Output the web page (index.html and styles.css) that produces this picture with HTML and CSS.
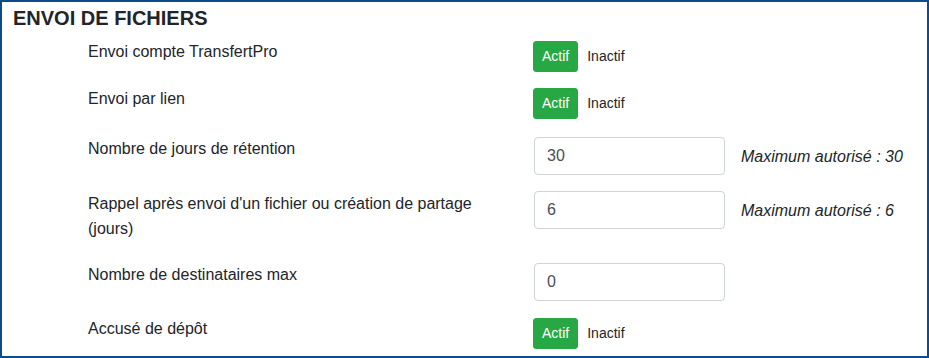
FILE: index.html
```html
<!DOCTYPE html>
<html lang="fr">
<head>
<meta charset="utf-8">
<title>Envoi de fichiers</title>
<link rel="stylesheet" href="styles.css">
</head>
<body>
<section class="panel">
  <h2 class="panel-title">ENVOI DE FICHIERS</h2>
  <div class="form">
    <div class="row r1">
      <label class="label">Envoi compte TransfertPro</label>
      <div class="control">
        <div class="toggle">
          <button class="btn btn-on">Actif</button>
          <button class="btn btn-off">Inactif</button>
        </div>
      </div>
    </div>
    <div class="row r2">
      <label class="label">Envoi par lien</label>
      <div class="control">
        <div class="toggle">
          <button class="btn btn-on">Actif</button>
          <button class="btn btn-off">Inactif</button>
        </div>
      </div>
    </div>
    <div class="row r3">
      <label class="label">Nombre de jours de rétention</label>
      <div class="control">
        <input class="input" type="text" value="30">
      </div>
      <div class="hint">Maximum autorisé : 30</div>
    </div>
    <div class="row r4">
      <label class="label">Rappel après envoi d'un fichier ou création de partage (jours)</label>
      <div class="control">
        <input class="input" type="text" value="6">
      </div>
      <div class="hint">Maximum autorisé : 6</div>
    </div>
    <div class="row r5">
      <label class="label">Nombre de destinataires max</label>
      <div class="control">
        <input class="input" type="text" value="0">
      </div>
    </div>
    <div class="row r6">
      <label class="label">Accusé de dépôt</label>
      <div class="control">
        <div class="toggle">
          <button class="btn btn-on">Actif</button>
          <button class="btn btn-off">Inactif</button>
        </div>
      </div>
    </div>
  </div>
</section>
</body>
</html>
```
FILE: styles.css
```css
* { box-sizing: border-box; }
html, body { margin: 0; padding: 0; background: #fff; }
body {
  font-family: "Liberation Sans", Arial, sans-serif;
  color: #212529;
}
.panel {
  width: 929px;
  height: 358px;
  border: 2px solid #0d4c8a;
  overflow: hidden;
}
.panel-title {
  margin: 4px 0 10px 11px;
  font-size: 20px;
  line-height: 24px;
  font-weight: bold;
  color: #212529;
}
.form { padding-left: 86px; }
.row {
  display: flex;
  align-items: flex-start;
}
.r1 { margin-bottom: 15px; }
.r2 { margin-bottom: 18px; }
.r3 { margin-bottom: 16px; }
.r4 { margin-bottom: 22px; }
.r5 { margin-bottom: 16px; }
.label {
  width: 416px;
  margin-right: 30px;
  font-size: 16px;
  line-height: 24px;
}
.r4 .label { line-height: 25px; }
.control { width: 191px; }
.toggle { display: flex; padding-top: 1px; margin-left: -1px; }
.btn {
  font-family: inherit;
  font-size: 14px;
  line-height: 21px;
  padding: 4px 8px;
  border: 1px solid transparent;
  border-radius: 3px;
  background: transparent;
  color: #212529;
}
.btn-on {
  background: #28a745;
  border-color: #28a745;
  color: #fff;
}
.input {
  display: block;
  width: 191px;
  height: 38px;
  padding: 6px 12px;
  border: 1px solid #ced4da;
  border-radius: 4px;
  font-family: inherit;
  font-size: 16px;
  line-height: 24px;
  color: #495057;
  background: #fff;
}
.hint {
  margin-left: 16px;
  padding-top: 8px;
  font-size: 16px;
  line-height: 24px;
  font-style: italic;
}
```
